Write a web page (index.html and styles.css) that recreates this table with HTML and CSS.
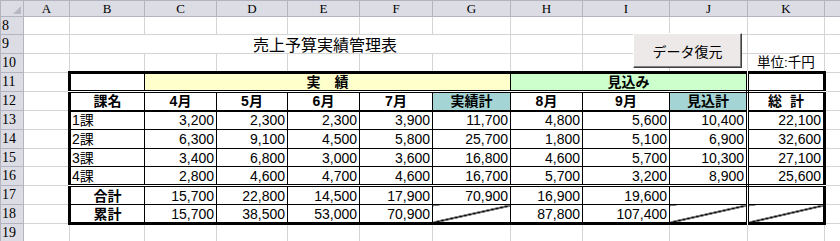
FILE: index.html
```html
<!DOCTYPE html>
<html lang="ja">
<head>
<meta charset="utf-8">
<title>売上予算実績管理表</title>
<link rel="stylesheet" href="styles.css">
</head>
<body>
<div class="wrap">
<table class="sheet">
<colgroup>
<col class="w-rh"><col class="w-a"><col class="w-b"><col class="w-c"><col class="w-d"><col class="w-e"><col class="w-f"><col class="w-g"><col class="w-h"><col class="w-i"><col class="w-j"><col class="w-k"><col class="w-l">
</colgroup>
<tr class="r-hd">
<td class="hd corner"><span class="tri"></span></td><td class="hd">A</td><td class="hd">B</td><td class="hd">C</td><td class="hd">D</td><td class="hd">E</td><td class="hd">F</td><td class="hd">G</td><td class="hd">H</td><td class="hd">I</td><td class="hd">J</td><td class="hd">K</td><td class="hd"></td>
</tr>
<tr class="r18"><td class="rh">8</td><td></td><td></td><td></td><td></td><td></td><td></td><td></td><td></td><td></td><td></td><td></td><td></td></tr>
<tr class="r19"><td class="rh">9</td><td></td><td colspan="6" class="title">売上予算実績管理表</td><td></td><td></td><td></td><td></td><td></td></tr>
<tr class="r19"><td class="rh">10</td><td></td><td></td><td></td><td></td><td></td><td></td><td></td><td></td><td></td><td></td><td class="unit">単位:千円</td><td></td></tr>
<tr class="r19"><td class="rh">11</td><td></td>
<td class="t L T dbB"></td>
<td colspan="5" class="t T dbB yel hb">実　績</td>
<td colspan="3" class="t T dbB grn hb dbR">見込み</td>
<td class="t T R dbB"></td><td></td></tr>
<tr class="r19"><td class="rh">12</td><td></td>
<td class="t L medB hb">課名</td>
<td class="t medB hb">4月</td><td class="t medB hb">5月</td><td class="t medB hb">6月</td><td class="t medB hb">7月</td>
<td class="t medB hb cya">実績計</td>
<td class="t medB hb">8月</td><td class="t medB hb">9月</td>
<td class="t medB hb cya dbR">見込計</td>
<td class="t medB hb R">総&nbsp;&nbsp;計</td><td></td></tr>
<tr class="r19"><td class="rh">13</td><td></td>
<td class="t L lab">1課</td><td class="t n">3,200</td><td class="t n">2,300</td><td class="t n">2,300</td><td class="t n">3,900</td><td class="t n">11,700</td><td class="t n">4,800</td><td class="t n">5,600</td><td class="t n dbR">10,400</td><td class="t n R">22,100</td><td></td></tr>
<tr class="r19"><td class="rh">14</td><td></td>
<td class="t L lab">2課</td><td class="t n">6,300</td><td class="t n">9,100</td><td class="t n">4,500</td><td class="t n">5,800</td><td class="t n">25,700</td><td class="t n">1,800</td><td class="t n">5,100</td><td class="t n dbR">6,900</td><td class="t n R">32,600</td><td></td></tr>
<tr class="r18"><td class="rh">15</td><td></td>
<td class="t L lab">3課</td><td class="t n">3,400</td><td class="t n">6,800</td><td class="t n">3,000</td><td class="t n">3,600</td><td class="t n">16,800</td><td class="t n">4,600</td><td class="t n">5,700</td><td class="t n dbR">10,300</td><td class="t n R">27,100</td><td></td></tr>
<tr class="r19"><td class="rh">16</td><td></td>
<td class="t L lab dbB">4課</td><td class="t n dbB">2,800</td><td class="t n dbB">4,600</td><td class="t n dbB">4,700</td><td class="t n dbB">4,600</td><td class="t n dbB">16,700</td><td class="t n dbB">5,700</td><td class="t n dbB">3,200</td><td class="t n dbR dbB">8,900</td><td class="t n R dbB">25,600</td><td></td></tr>
<tr class="r19"><td class="rh">17</td><td></td>
<td class="t L hb">合計</td><td class="t n">15,700</td><td class="t n">22,800</td><td class="t n">14,500</td><td class="t n">17,900</td><td class="t n">70,900</td><td class="t n">16,900</td><td class="t n">19,600</td><td class="t n dbR"></td><td class="t n R"></td><td></td></tr>
<tr class="r19"><td class="rh">18</td><td></td>
<td class="t L B hb">累計</td><td class="t n B">15,700</td><td class="t n B">38,500</td><td class="t n B">53,000</td><td class="t n B">70,900</td><td class="t n B diag"></td><td class="t n B">87,800</td><td class="t n B">107,400</td><td class="t n B dbR diag"></td><td class="t n B R diag"></td><td></td></tr>
<tr class="r18"><td class="rh">19</td><td></td><td></td><td></td><td></td><td></td><td></td><td></td><td></td><td></td><td></td><td></td><td></td></tr>
</table>
<button class="btn" type="button">データ復元</button>
</div>
</body>
</html>
```
FILE: styles.css
```css
html, body {
  margin: 0;
  padding: 0;
  background: #ffffff;
}

.wrap {
  position: relative;
  width: 840px;
  height: 241px;
  overflow: hidden;
}

.sheet {
  border-collapse: collapse;
  table-layout: fixed;
  width: 840px;
  font-family: "Liberation Sans", "Noto Sans CJK JP", sans-serif;
  font-size: 14px;
  color: #000;
}

.w-rh { width: 23px; }
.w-a { width: 46px; }
.w-b { width: 75px; }
.w-c { width: 72px; }
.w-d { width: 71px; }
.w-e { width: 72px; }
.w-f { width: 73px; }
.w-g { width: 78px; }
.w-h { width: 72px; }
.w-i { width: 87px; }
.w-j { width: 78px; }
.w-k { width: 77px; }
.w-l { width: 16px; }

.sheet td {
  border: 1px solid #d4d4d4;
  padding: 0 2px;
  white-space: nowrap;
  overflow: hidden;
  line-height: 16px;
  vertical-align: middle;
}

.r-hd { height: 16px; }
.r18 { height: 18px; }
.r19 { height: 19px; }

.sheet td.hd {
  background: #dcdce4;
  border: 1px solid #b4b4c0;
  text-align: center;
  font-family: "Liberation Serif", serif;
  font-size: 13px;
  line-height: 14px;
  padding: 0;
}

.sheet td.corner {
  position: relative;
}

.tri {
  position: absolute;
  right: 2px;
  bottom: 2px;
  width: 0;
  height: 0;
  border-left: 8px solid transparent;
  border-bottom: 8px solid #b8b8c4;
}

.sheet td.rh {
  background: #dcdce4;
  border: 1px solid #b4b4c0;
  font-family: "Liberation Serif", serif;
  font-size: 14px;
  padding: 0 0 0 1px;
  text-align: left;
}

.sheet td.title {
  font-family: "Noto Sans CJK JP", sans-serif;
  font-size: 16px;
  line-height: 18px;
  padding-left: 183px;
  text-align: left;
  overflow: visible;
}

.sheet td.unit {
  font-family: "Liberation Sans", "Noto Sans CJK JP", sans-serif;
  font-size: 13.5px;
  text-align: center;
  vertical-align: bottom;
  padding: 0;
  overflow: visible;
}

.sheet td.t { border: 1px solid #000; }
.sheet td.L { border-left: 3px solid #000; }
.sheet td.R { border-right: 3px solid #000; }
.sheet td.T { border-top: 3px solid #000; }
.sheet td.B { border-bottom: 3px solid #000; }
.sheet td.dbB { border-bottom: 3px double #000; }
.sheet td.medB { border-bottom: 2px solid #000; }
.sheet td.dbR { border-right: 3px double #000; }

.yel { background: #ffffcc; }
.grn { background: #ccffcc; }
.cya { background: #a4d4d4; }

.sheet td.hb {
  font-weight: bold;
  text-align: center;
}

.sheet td.n {
  text-align: right;
  padding-right: 2px;
}

.sheet td.lab {
  text-align: left;
  padding-left: 1px;
}

.diag {
  background-image: linear-gradient(to bottom right,
    transparent calc(50% - 1px),
    #000 calc(50% - 0.6px),
    #000 calc(50% + 0.6px),
    transparent calc(50% + 1px));
}

.btn {
  position: absolute;
  left: 633px;
  top: 33px;
  width: 109px;
  height: 35px;
  margin: 0;
  padding: 0;
  background: #ece9e8;
  border: 1px solid;
  border-color: #ffffff #404040 #404040 #ffffff;
  box-shadow: inset -1px -1px 0 #808080;
  font-family: "Noto Sans CJK JP", sans-serif;
  font-size: 14px;
  color: #000;
}
```
